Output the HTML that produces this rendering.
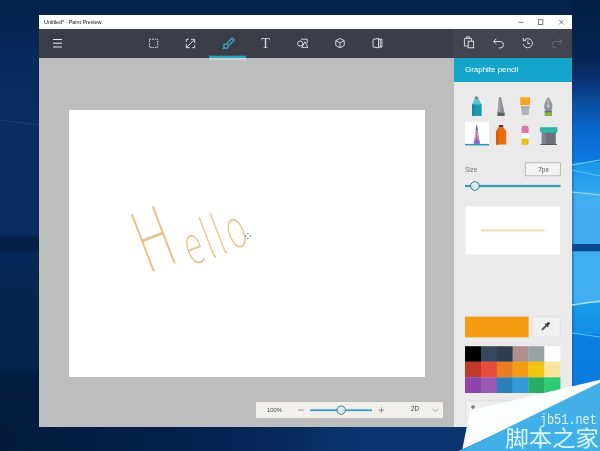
<!DOCTYPE html>
<html lang="en">
<head>
<meta charset="utf-8">
<title>Paint Preview</title>
<style>
html,body{margin:0;padding:0;}
body{width:600px;height:451px;overflow:hidden;position:relative;background:#041f45;font-family:"Liberation Sans","Noto Sans CJK SC",sans-serif;}
.abs{position:absolute;}
#title .t,#shead .t,.lbl,#hw,svg{will-change:transform;}
#desk{left:0;top:0;width:600px;height:451px;}
#win{left:39px;top:15px;width:533px;height:412px;background:#bdbdbd;overflow:hidden;}
#title{left:0;top:0;width:533px;height:14px;background:#fff;}
#title .t{left:5px;top:3px;font-size:5.45px;line-height:8px;color:#151515;white-space:nowrap;letter-spacing:-0.05px;}
#bar{left:0;top:14px;width:533px;height:29.400px;background:linear-gradient(90deg,#3b3e47 0,#3b3e47 415px,#42454e 415px,#42454e 100%);}
#paper{left:29.500px;top:94.800px;width:356.500px;height:267.200px;background:#fff;}
#side{left:415px;top:43px;width:118px;height:369px;background:#eaeaeb;}
#shead{left:0;top:0.400px;width:118px;height:23.600px;background:#15a4ca;}
#shead .t{left:10.800px;top:5.600px;font-size:7.950px;line-height:12px;color:#fff;white-space:nowrap;}
.lbl{font-size:6px;line-height:8px;color:#666;white-space:nowrap;}
#hw{left:72px;top:99px;font-family:"Noto Sans CJK SC","DejaVu Sans",sans-serif;font-weight:100;font-size:54px;line-height:60px;height:60px;color:#e6c088;white-space:nowrap;transform-origin:0 47px;transform:rotate(-21deg) scaleX(0.6);letter-spacing:6px;}
#hw::first-letter{font-size:84px;vertical-align:8px;margin-right:8px;}
#zoom{left:216.600px;top:386.500px;width:187.600px;height:16.200px;background:#f1f0ec;}
</style>
</head>
<body>
<!-- desktop wallpaper -->
<svg id="desk" class="abs" width="600" height="451" viewBox="0 0 600 451">
  <defs>
    <linearGradient id="gl" x1="0" y1="0" x2="0" y2="1">
      <stop offset="0" stop-color="#04214a"/>
      <stop offset="0.133" stop-color="#072a5c"/>
      <stop offset="0.27" stop-color="#092d62"/>
      <stop offset="0.518" stop-color="#092d62"/>
      <stop offset="0.528" stop-color="#041f47"/>
      <stop offset="0.553" stop-color="#041f47"/>
      <stop offset="0.562" stop-color="#06295a"/>
      <stop offset="0.66" stop-color="#05254f"/>
      <stop offset="0.818" stop-color="#05234c"/>
      <stop offset="0.826" stop-color="#031d42"/>
      <stop offset="1" stop-color="#031a3b"/>
    </linearGradient>
    <linearGradient id="gr" x1="0" y1="0" x2="0" y2="1">
      <stop offset="0" stop-color="#031d42"/>
      <stop offset="0.13" stop-color="#062654"/>
      <stop offset="0.17" stop-color="#0a3070"/>
      <stop offset="0.29" stop-color="#0a6ad0"/>
      <stop offset="0.36" stop-color="#0a7ae0"/>
      <stop offset="0.36" stop-color="#1a96e8"/>
      <stop offset="0.425" stop-color="#30a6f0"/>
      <stop offset="0.43" stop-color="#42b0f0"/>
      <stop offset="0.54" stop-color="#40aeee"/>
      <stop offset="0.541" stop-color="#0a4a90"/>
      <stop offset="0.557" stop-color="#0a4a90"/>
      <stop offset="0.558" stop-color="#40b0f0"/>
      <stop offset="0.672" stop-color="#40b0f0"/>
      <stop offset="0.673" stop-color="#1a9ae8"/>
      <stop offset="0.74" stop-color="#1090e8"/>
      <stop offset="0.741" stop-color="#0a80e0"/>
      <stop offset="1" stop-color="#0a78d8"/>
    </linearGradient>
    <linearGradient id="gb" x1="0" y1="0" x2="1" y2="0">
      <stop offset="0" stop-color="#031a3b"/>
      <stop offset="0.3" stop-color="#04204a"/>
      <stop offset="0.5" stop-color="#082c60"/>
      <stop offset="0.6" stop-color="#0a3570"/>
      <stop offset="0.78" stop-color="#0a3570"/>
      <stop offset="1" stop-color="#0a3570"/>
    </linearGradient>
  </defs>
  <rect x="0" y="0" width="600" height="451" fill="url(#gl)"/>
  <rect x="0" y="427" width="600" height="24" fill="url(#gb)"/>
  <rect x="572" y="0" width="28" height="451" fill="url(#gr)"/>
  <defs><linearGradient id="ge" x1="0" y1="0" x2="1" y2="0"><stop offset="0" stop-color="#0a56b0" stop-opacity="0.550"/><stop offset="1" stop-color="#0a56b0" stop-opacity="0"/></linearGradient></defs>
  <rect x="572" y="100" width="3.500" height="290" fill="url(#ge)"/>
  <!-- light rays -->
  <path d="M572 165 L600 160" stroke="#7fd0f8" stroke-width="1.2" fill="none"/>
  <path d="M572 192 L600 195" stroke="#a0e0ff" stroke-width="1.2" fill="none"/>
  <path d="M572 170 L600 176" stroke="#5cc0f6" stroke-width="1" fill="none"/>
  <path d="M572 305 L600 301" stroke="#a0e8ff" stroke-width="1.4" fill="none"/>
  <path d="M572 333 L600 337" stroke="#60c0f8" stroke-width="1.2" fill="none"/>
  <path d="M0 120 L39 125" stroke="#1d4a86" stroke-width="1" fill="none" opacity="0.6"/>
</svg>

<!-- application window -->
<div id="win" class="abs">
  <div id="title" class="abs">
    <div class="t abs">Untitled* - Paint Preview</div>
    <svg class="abs" style="left:470px;top:0" width="63" height="14" viewBox="0 0 63 14">
      <path d="M9.700 7.300 H14.200" stroke="#444" stroke-width="0.700" fill="none"/>
      <rect x="29.300" y="4.800" width="4.600" height="4.600" stroke="#444" stroke-width="0.700" fill="none"/>
      <path d="M50 4.800 L54.800 9.600 M54.800 4.800 L50 9.600" stroke="#444" stroke-width="0.700" fill="none"/>
    </svg>
  </div>

  <div id="bar" class="abs">
    <svg class="abs" style="left:0;top:0" width="533" height="29" viewBox="0 0 533 29" fill="none" stroke="#e8e8ea" stroke-width="0.9">
      <!-- hamburger -->
      <path d="M14 10.5 H23 M14 14.2 H23 M14 18 H23" stroke-width="1"/>
      <!-- select -->
      <rect x="110.500" y="10.200" width="8.200" height="8.200" stroke-dasharray="1.6 0.9"/>
      <!-- resize -->
      <path d="M147.600 18.400 L155.400 10.600 M152 10.300 H155.700 V14 M147.300 15 V18.700 H151 M147.300 12.800 V10.300 H149.800 M155.700 16.200 V18.700 H153.200"/>
      <!-- brush -->
      <g stroke="#38a2cc" stroke-width="1.350" stroke-linejoin="round" transform="translate(-0.500 0.700)">
        <path d="M188.300 13.800 L193.700 8.400 L195.700 10.400 L190.300 15.800"/>
        <circle cx="187.500" cy="16.400" r="2.200"/>
        <path d="M184 19.200 L185.600 18.100"/>
      </g>
      <rect x="170" y="26.700" width="37.200" height="2.300" fill="#2fa3be" stroke="none"/>
      <!-- shapes -->
      <circle cx="261.200" cy="14.600" r="2.600"/>
      <path d="M262 10.200 H268.200 V14.400"/>
      <path d="M265.900 12.800 L268.900 18.400 H262.900 Z"/>
      <!-- cube -->
      <path d="M301 9.400 L305.200 11.600 V16.600 L301 18.800 L296.800 16.600 V11.600 Z M296.800 11.600 L301 13.800 L305.200 11.600 M301 13.800 V18.800"/>
      <!-- canvas -->
      <path d="M334 10.400 L339.500 9.400 V18.900 L334 17.900 Z M339.500 10.200 H343 V18.100 H339.500 M341.300 10.200 V18.100"/>
      <!-- paste -->
      <path d="M429 17 H425.400 V9.400 H432.400 V12 M427.400 9.400 V7.800 H430.400 V9.400"/>
      <rect x="429.200" y="12.200" width="5.400" height="6.600"/>
      <!-- undo -->
      <path d="M457.400 9.700 L454.600 12.500 L457.400 15.300 M454.600 12.500 H461.300 A3.200 3.200 0 0 1 461.300 18.900 H459.800"/>
      <!-- history -->
      <path d="M485.300 11.200 A4.600 4.600 0 1 1 484.250 15 M484.300 8.900 V11.700 H487.100 M488.800 11.800 V14.500 H490.900"/>
      <!-- redo -->
      <path d="M520.200 9.700 L523 12.500 L520.200 15.300 M523 12.500 H516.300 A3.200 3.200 0 0 0 516.300 18.900 H517.800" stroke="#6c6f79"/>
    </svg>
    <svg class="abs" style="left:221px;top:8px" width="12" height="13" viewBox="0 0 12 13">
      <text x="5.600" y="11.300" text-anchor="middle" font-family="Liberation Serif, serif" font-size="14" fill="#d8d8dc">T</text>
    </svg>
  </div>

  <div class="abs" style="left:170px;top:43px;width:37.200px;height:3.400px;background:linear-gradient(#c4d6de,#c6cdd0 60%,#bdbdbd);"></div>
  <!-- drawing surface -->
  <div id="paper" class="abs">
    <div id="hw" class="abs">Hello</div>
    <svg class="abs" style="left:0;top:0" width="356" height="267" viewBox="0 0 356 267">
      <g fill="#5a5a5a">
        <rect x="178.300" y="123" width="1.100" height="1.100"/>
        <rect x="178.300" y="128" width="1.100" height="1.100"/>
        <rect x="175.900" y="125.500" width="1.100" height="1.100"/>
        <rect x="180.800" y="125.500" width="1.100" height="1.100"/>
      </g>
    </svg>
  </div>

  <!-- zoom bar -->
  <div id="zoom" class="abs">
    <div class="lbl abs" style="left:11.800px;top:4px;color:#444;font-size:5.800px;">100%</div>
    <svg class="abs" style="left:0;top:0" width="188" height="17" viewBox="0 0 188 17" fill="none">
      <path d="M42 8.100 H48.400" stroke="#777" stroke-width="0.700"/>
      <path d="M54.300 8.150 H116" stroke="#c8e4ec" stroke-width="3"/>
      <path d="M54.300 8.150 H116" stroke="#2f9db6" stroke-width="1.500"/>
      <circle cx="85.200" cy="8.150" r="4.200" fill="#dfebf3" stroke="#2f7f96" stroke-width="1"/>
      <path d="M122.700 8.100 H128.100 M125.400 5.400 V10.800" stroke="#666" stroke-width="0.700"/>
      <path d="M176.600 6.900 L179.300 9.600 L182 6.900" stroke="#777" stroke-width="0.700"/>
    </svg>
    <div class="lbl abs" style="left:155.800px;top:3.900px;color:#444;font-size:6.300px;">2D</div>
  </div>

  <!-- side panel -->
  <div id="side" class="abs">
    <div id="shead" class="abs"><div class="t abs">Graphite pencil</div></div>

    <svg class="abs" style="left:0;top:24px" width="118" height="345" viewBox="0 82 118 345">
      <!-- row 1 -->
      <!-- marker -->
      <path d="M20.600 99.400 L21.200 95.900 L24.300 97.200 L24.700 99.400 Z" fill="#6c8094"/>
      <path d="M18.300 104.300 L20.400 99.200 H24.800 L27.300 104.300 Z" fill="#5dbfd2"/>
      <rect x="18" y="104.200" width="9.700" height="11.700" fill="#1b98b2"/>
      <rect x="18" y="104.200" width="2.500" height="11.700" fill="#168aa3"/>
      <!-- pen -->
      <path d="M45 97 H47 L50.400 112.500 H43.600 Z" fill="#8b8e96"/>
      <path d="M45 97 H46 L47 112.500 H43.600 Z" fill="#9da0a8"/>
      <rect x="43.400" y="112.500" width="7.200" height="3.500" fill="#5d6068"/>
      <!-- oil brush -->
      <rect x="66.300" y="97" width="9.800" height="8.600" rx="0.600" fill="#f4a522"/>
      <rect x="66.300" y="97" width="9.800" height="1.500" rx="0.600" fill="#f8b84a"/>
      <rect x="66.600" y="105.400" width="9.200" height="1.400" fill="#efe2c6"/>
      <path d="M67 106.600 H75.500 L74.700 115.100 H67.900 Z" fill="#aeb3bb"/>
      <path d="M67 106.600 H75.500 L75.300 108.400 H67.200 Z" fill="#9da2ab"/>
      <!-- calligraphy nib -->
      <path d="M94.300 97 C96.500 100 98.800 103.500 98.400 107.500 L97.300 111 H91.300 L90.200 107.500 C89.800 103.500 92.100 100 94.300 97 Z" fill="#8f939b"/>
      <path d="M94.300 99.500 V106" stroke="#e6e6e6" stroke-width="0.700"/>
      <circle cx="94.300" cy="106.500" r="1.100" fill="#e6e6e6"/>
      <rect x="90.600" y="110.800" width="7.400" height="2" fill="#6a6e76"/>
      <rect x="90.600" y="112.600" width="7.400" height="3.400" fill="#84b83c"/>
      <!-- row 2 -->
      <rect x="11" y="121.600" width="24" height="23.400" fill="#ffffff"/>
      <rect x="11" y="143.900" width="24" height="1.500" fill="#2a9cc0"/>
      <!-- pencil -->
      <defs>
        <linearGradient id="pg" x1="0" y1="0" x2="0" y2="1">
          <stop offset="0" stop-color="#7b4fb5"/>
          <stop offset="0.3" stop-color="#b66fc0"/>
          <stop offset="0.55" stop-color="#e89aa0"/>
          <stop offset="0.75" stop-color="#b08ad0"/>
          <stop offset="1" stop-color="#7d63c4"/>
        </linearGradient>
      </defs>
      <path d="M22.700 124.400 L26.100 143.700 H19.500 Z" fill="url(#pg)"/>
      <path d="M22.700 132 L23.900 143.700 H21.700 Z" fill="#7a55b8" opacity="0.700"/>
      <path d="M22.700 124.400 L23.700 130 H21.700 Z" fill="#6648a6"/>
      <!-- spray can -->
      <rect x="44.800" y="125" width="4.400" height="2.600" fill="#5a3a30"/>
      <path d="M44.400 127.400 H49.600 L52.200 131 V144.600 H42 V131 Z" fill="#ea6c0c"/>
      <rect x="42" y="131" width="3" height="13.600" fill="#d85f08"/>
      <!-- eraser -->
      <path d="M67.600 128 A2.200 2.200 0 0 1 69.800 125.800 H72.400 A2.200 2.200 0 0 1 74.600 128 V133.300 H67.600 Z" fill="#dc74ac"/>
      <rect x="67.600" y="133.300" width="7" height="5.400" fill="#ffffff"/>
      <rect x="67.600" y="138.700" width="7" height="6.100" fill="#e9c11e"/>
      <!-- bucket -->
      <rect x="87.800" y="132" width="14" height="12.600" fill="#6b7079"/>
      <rect x="87.800" y="132" width="4" height="12.600" fill="#7d828b"/>
      <path d="M86 127.200 H103.400 V132 L101.500 133.500 L100 131.500 L98 134.500 L96.200 131.500 L94 133.800 L92 131.500 L90 134 L88 131.500 L86 132.500 Z" fill="#2fb4a6"/>
      <rect x="86.400" y="144" width="16.600" height="1" fill="#555960"/>

      <!-- size slider -->
      <rect x="71.300" y="162.800" width="35" height="13" fill="#f3f3f3" stroke="#b0b0b0" stroke-width="0.800"/>
      <path d="M11 186 H106.500" stroke="#cde5ec" stroke-width="3.400"/>
      <path d="M11 186 H106.500" stroke="#3a9ab4" stroke-width="1.800"/>
      <circle cx="20.900" cy="186" r="4.300" fill="#deebf4" stroke="#2f7f96" stroke-width="1"/>

      <!-- preview -->
      <rect x="11.500" y="206.500" width="94.500" height="48" fill="#ffffff"/>
      <path d="M27 230.300 H90.500" stroke="#f2e0b6" stroke-width="2.200"/>

      <!-- current colour -->
      <rect x="11" y="316.600" width="63.600" height="20.800" fill="#f39c14"/>
      <rect x="78.200" y="316.900" width="28" height="20.200" fill="#f1f1f1" stroke="#d6d6d6" stroke-width="0.600"/>
      <g transform="translate(91.200 326.700) rotate(45)">
        <rect x="-1.300" y="-6" width="2.600" height="3.600" rx="1" fill="#333"/>
        <rect x="-2.200" y="-2.800" width="4.400" height="1.300" fill="#333"/>
        <path d="M-1 -1.500 H1 V3.800 L0 5.400 L-1 3.800 Z" fill="#555"/>
      </g>

      <!-- palette -->
      <g>
        <rect x="11.000" y="346.200" width="16.200" height="15.700" fill="#000000"/>
        <rect x="27.000" y="346.200" width="16.000" height="15.700" fill="#34495e"/>
        <rect x="42.800" y="346.200" width="16.100" height="15.700" fill="#2c3e50"/>
        <rect x="58.700" y="346.200" width="16.000" height="15.700" fill="#b38f8c"/>
        <rect x="74.500" y="346.200" width="16.100" height="15.700" fill="#95a5a6"/>
        <rect x="90.400" y="346.200" width="16.000" height="15.700" fill="#ffffff"/>
        <rect x="11.000" y="361.700" width="16.200" height="15.900" fill="#c0392b"/>
        <rect x="27.000" y="361.700" width="16.000" height="15.900" fill="#e74c3c"/>
        <rect x="42.800" y="361.700" width="16.100" height="15.900" fill="#e67e22"/>
        <rect x="58.700" y="361.700" width="16.000" height="15.900" fill="#f39c12"/>
        <rect x="74.500" y="361.700" width="16.100" height="15.900" fill="#f1c40f"/>
        <rect x="90.400" y="361.700" width="16.000" height="15.900" fill="#f8e49c"/>
        <rect x="11.000" y="377.400" width="16.200" height="15.600" fill="#8e44ad"/>
        <rect x="27.000" y="377.400" width="16.000" height="15.600" fill="#9b59b6"/>
        <rect x="42.800" y="377.400" width="16.100" height="15.600" fill="#2980b9"/>
        <rect x="58.700" y="377.400" width="16.000" height="15.600" fill="#3498db"/>
        <rect x="74.500" y="377.400" width="16.100" height="15.600" fill="#27ae60"/>
        <rect x="90.400" y="377.400" width="16.000" height="15.600" fill="#2ecc71"/>
      </g>
      <!-- add colour button -->
      <rect x="11.300" y="401" width="95" height="16" fill="#efefef" stroke="#d6d6d6" stroke-width="0.600"/>
      <path d="M17 407 H21 M19 405 V409" stroke="#444" stroke-width="0.900"/>
    </svg>
    <div class="lbl abs" style="left:11px;top:108.200px;font-size:6.300px;color:#777;">Size</div>
    <div class="lbl abs" style="left:71.500px;top:108.200px;width:35px;text-align:center;color:#555;font-size:6.600px;">7px</div>
  </div>
</div>

<!-- watermark -->
<svg class="abs" style="left:440px;top:370px" width="160" height="81" viewBox="440 370 160 81">
  <path d="M470 410.500 L600 379.800 V386 L459 451 H462 Z" fill="#fbfdff"/>
  <path d="M600 382.400 L460 451 H600 Z" fill="#41b0e9"/>
  <text x="539.800" y="423.700" font-family="Liberation Mono, DejaVu Sans Mono, monospace" font-size="14px" fill="#dcf5ff" textLength="57" lengthAdjust="spacingAndGlyphs">jb51.net</text>
  <text x="505.500" y="445.800" font-family="Noto Sans CJK SC, WenQuanYi Zen Hei, sans-serif" font-weight="400" font-size="22px" fill="#dcf5ff" textLength="93.500" lengthAdjust="spacingAndGlyphs">脚本之家</text>
</svg>
</body>
</html>
